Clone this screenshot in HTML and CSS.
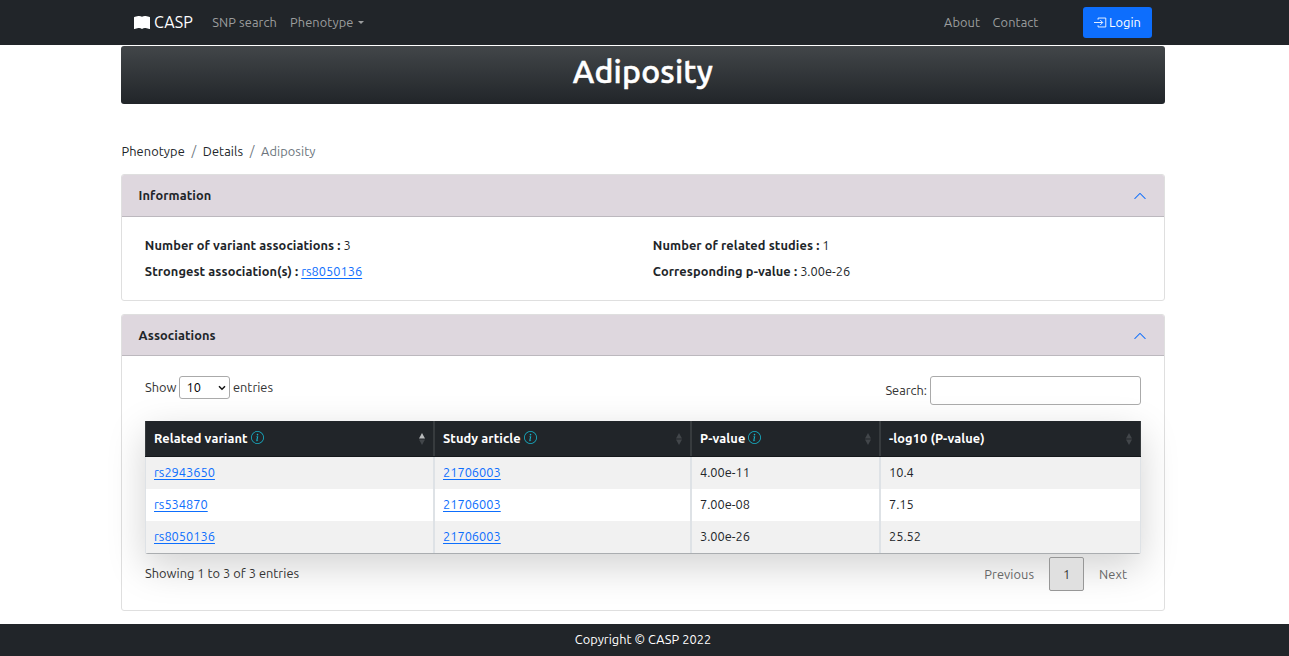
FILE: index.html
```html
<!DOCTYPE html>
<html lang="en">
<head>
<meta charset="utf-8">
<title>CASP - Adiposity</title>
<link rel="stylesheet" href="styles.css">
</head>
<body>
<svg class="sprite" aria-hidden="true">
  <symbol id="info" viewBox="0 0 16 16"><path d="M8 15A7 7 0 1 1 8 1a7 7 0 0 1 0 14zm0 1A8 8 0 1 0 8 0a8 8 0 0 0 0 16z"/><path d="m8.930 6.588-2.290.287-.082.380.450.083c.294.070.352.176.288.469l-.738 3.468c-.194.897.105 1.319.808 1.319.545 0 1.178-.252 1.465-.598l.088-.416c-.200.176-.492.246-.686.246-.275 0-.375-.193-.304-.533L8.930 6.588zM9 4.500a1 1 0 1 1-2 0 1 1 0 0 1 2 0z"/></symbol>
  <symbol id="chevron" viewBox="0 0 16 16"><path fill-rule="evenodd" d="M1.646 4.646a.5.5 0 0 1 .708 0L8 10.293l5.646-5.647a.5.5 0 0 1 .708.708l-6 6a.5.5 0 0 1-.708 0l-6-6a.5.5 0 0 1 0-.708z" transform="rotate(180 8 8)"/></symbol>
  <symbol id="sort" viewBox="0 0 6 12"><path class="up" d="M3 0 6 5.500H0z"/><path class="down" d="M3 12 0 6.500h6z"/></symbol>
</svg>
<header class="navbar">
  <div class="nav-inner">
    <a class="brand"><svg class="book" viewBox="0 0 16 16"><path d="M8 1.783C7.015.936 5.587.810 4.287.940c-1.514.153-3.042.672-3.994 1.105A.5.5 0 0 0 0 2.500v11a.5.5 0 0 0 .707.455c.882-.400 2.303-.881 3.680-1.020 1.409-.142 2.590.087 3.223.877a.5.5 0 0 0 .780 0c.633-.790 1.814-1.019 3.222-.877 1.378.139 2.800.620 3.681 1.020A.5.5 0 0 0 16 13.500v-11a.5.5 0 0 0-.293-.455c-.952-.433-2.480-.952-3.994-1.105C10.413.809 8.985.936 8 1.783z"/></svg><span>CASP</span></a>
    <a class="nav-link snp">SNP search</a>
    <a class="nav-link pheno">Phenotype<i class="caret"></i></a>
    <a class="nav-link about">About</a>
    <a class="nav-link contact">Contact</a>
    <a class="login"><svg viewBox="0 0 16 16"><path d="M5 4.500V2.500h9.500v11H5v-2M0 8h10.500M7.700 5l3 3-3 3"/></svg><span>Login</span></a>
  </div>
</header>
<main>
  <h1 class="banner"><span>Adiposity</span></h1>
  <nav class="crumbs"><span>Phenotype</span><i>/</i><span>Details</span><i>/</i><span class="current">Adiposity</span></nav>
  <section class="card info-card">
    <div class="card-head"><b>Information</b><svg><use href="#chevron"/></svg></div>
    <div class="facts">
      <p><b>Number of variant associations :</b> <span>3</span></p>
      <p><b>Number of related studies :</b> <span>1</span></p>
      <p><b>Strongest association(s) :</b> <a>rs8050136</a></p>
      <p><b>Corresponding p-value :</b> <span>3.00e-26</span></p>
    </div>
  </section>
  <section class="card assoc-card">
    <div class="card-head"><b>Associations</b><svg><use href="#chevron"/></svg></div>
    <div class="assoc-body">
      <div class="controls">
        <label class="length"><span class="show">Show</span><span class="select">10<svg viewBox="0 0 8 6"><path d="m1 1.200 3 3 3-3"/></svg></span><span>entries</span></label>
        <label class="search"><span>Search:</span><input type="text"></label>
      </div>
      <div class="table">
        <div class="row head">
          <div class="cell"><b>Related variant</b><svg class="info"><use href="#info"/></svg><svg class="sort asc"><use href="#sort"/></svg></div>
          <div class="cell"><b>Study article</b><svg class="info"><use href="#info"/></svg><svg class="sort"><use href="#sort"/></svg></div>
          <div class="cell"><b>P-value</b><svg class="info"><use href="#info"/></svg><svg class="sort"><use href="#sort"/></svg></div>
          <div class="cell"><b>-log10 (P-value)</b><svg class="sort"><use href="#sort"/></svg></div>
        </div>
        <div class="row odd"><div class="cell"><a>rs2943650</a></div><div class="cell"><a>21706003</a></div><div class="cell">4.00e-11</div><div class="cell">10.4</div></div>
        <div class="row"><div class="cell"><a>rs534870</a></div><div class="cell"><a>21706003</a></div><div class="cell">7.00e-08</div><div class="cell">7.15</div></div>
        <div class="row odd"><div class="cell"><a>rs8050136</a></div><div class="cell"><a>21706003</a></div><div class="cell">3.00e-26</div><div class="cell">25.52</div></div>
      </div>
      <div class="table-foot">
        <span class="showing">Showing 1 to 3 of 3 entries</span>
        <div class="pager"><span>Previous</span><span class="page">1</span><span>Next</span></div>
      </div>
    </div>
  </section>
</main>
<footer><span>Copyright © CASP 2022</span></footer>
</body>
</html>
```
FILE: styles.css
```css
* { box-sizing: border-box; }
body { margin: 0; font: 12.8px/20px "Ubuntu", "Noto Sans", sans-serif; color: #212529; background: #fff; overflow: hidden; }
svg { display: block; fill: currentColor; flex: none; }
.sprite { display: none; }
span, b, a { white-space: nowrap; }
b { letter-spacing: .09px; }
i { font-style: normal; }

.navbar { height: 45px; background: #212529; color: #fff; }
.nav-inner { display: flex; align-items: center; width: 1018px; height: 45px; margin-left: 134px; }
.brand { display: flex; align-items: center; width: 78px; font-size: 16px; gap: 4px; }
.brand span { padding-bottom: 2px; }
.book { width: 16px; height: 16px; }
.nav-link { display: flex; align-items: center; padding-bottom: 1px; color: #9b9d9e; letter-spacing: .1px; }
.snp { width: 78px; padding-left: .3px; }
.caret { margin: 0 0 0 5px; border: 3.5px solid transparent; border-top-color: currentColor; border-bottom: 0; }
.about { margin-left: auto; width: 48.6px; }
.contact { width: 90.4px; }
.login { display: flex; align-items: center; justify-content: center; gap: 2px; width: 69px; height: 31px; border-radius: 3px; background: #0d6efd; }
.login span { padding-bottom: 1px; }
.login svg { width: 13px; height: 13px; margin-bottom: 1px; fill: none; stroke: #fff; stroke-width: 1.1; }

main { width: 1044px; margin: 1px 0 0 121px; }
.banner { display: flex; justify-content: center; height: 58px; margin: 0; border-radius: 3px; background: linear-gradient(#424649, #212529); color: #fff; font-size: 32px; line-height: 50px; font-weight: 500; letter-spacing: .2px; -webkit-text-stroke: .5px #fff; }
.crumbs { display: flex; height: 20px; margin-top: 37px; padding-left: .5px; letter-spacing: .08px; }
.crumbs i { width: 18px; text-align: center; color: #6c757d; }
.current { color: #6c757d; }

.card { border: 1px solid #dfdfdf; border-radius: 3px; }
.info-card { height: 127px; margin-top: 13px; }
.assoc-card { height: 297px; margin-top: 13px; }
.card-head { display: flex; align-items: center; justify-content: space-between; height: 42px; padding: 0 17px 0 16.6px; background: #ded7de; border-bottom: 1px solid #bcb8be; border-radius: 2px 2px 0 0; }
.info-card .card-head b { padding-bottom: 2px; }
.assoc-card .card-head { height: 41px; }
.assoc-card .card-head svg { margin-top: 2px; }
.card-head svg { width: 14px; height: 14px; color: #0d6efd; }
.facts { display: grid; grid-template-columns: 508px 1fr; grid-auto-rows: 26px; padding: 15px 0 0 22.8px; }
.facts p { margin: 0; line-height: 26px; }
a { color: inherit; }
.facts a, .cell a { color: #0d6efd; text-decoration: underline; text-underline-offset: 2px; text-decoration-thickness: 1px; text-decoration-skip-ink: none; }

.assoc-body { padding: 20px 23px 0; }
.controls { display: flex; justify-content: space-between; height: 45px; color: #333; }
.length { display: flex; height: 23px; line-height: 23px; }
.show { width: 34px; }
.select { display: flex; align-items: center; justify-content: space-between; width: 51px; height: 23px; margin-right: 3px; padding: 0 3px 0 6.6px; border: 1px solid #aaa; border-radius: 3px; color: #000; background: #fff; }
.select svg { width: 8px; height: 6px; fill: none; stroke: #111; stroke-width: 1.5; }
.search { display: flex; gap: 3px; line-height: 29px; }
.search input { width: 211px; height: 29px; border: 1px solid #aaa; border-radius: 3px; background: transparent; }
.table { height: 133px; border-radius: 0 0 3px 3px; background: #fff; box-shadow: 0 12.8px 38.4px rgba(0,0,0,.175); border-bottom: 1px solid #aaadb0; }
.row { display: grid; grid-template-columns: 290px 257px 189px 260px; height: 32px; }
.cell { display: flex; align-items: center; padding: 0 0 2px 8px; border-right: 2px solid #dee2e6; }
.cell:first-child { border-left: 1px solid #dee2e6; }
.cell:last-child { border-right-width: 1px; }
.odd { background: #f1f1f1; }
.row:last-child { border-radius: 0 0 3px 3px; }
.head { height: 36px; background: #212529; color: #fff; border-bottom: 1px solid #15181b; }
.head .cell, .head .cell:first-child { border-color: #373b3e; }
.info { width: 13px; height: 13px; margin-left: 3px; color: #17b2c9; }
.sort { width: 6px; height: 12px; margin: 3px 8px 0 auto; color: #42464a; }
.asc { --up: #b8babb; }
.up { fill: var(--up, currentColor); }
.table-foot { display: flex; justify-content: space-between; position: relative; color: #333; padding-top: 3px; }
.showing { line-height: 32px; letter-spacing: .03px; }
.pager { display: flex; line-height: 34px; color: #666; padding-right: 14px; letter-spacing: .06px; }
.page { width: 35px; height: 34px; margin: 0 15px; border: 1px solid #979797; border-radius: 2px; background: #e0e0e0; text-align: center; color: #333; line-height: 33px; }

footer { display: flex; justify-content: center; height: 32px; margin-top: 13px; padding-right: 3px; background: #212529; color: #fff; line-height: 31px; letter-spacing: .03px; position: relative; }
```
